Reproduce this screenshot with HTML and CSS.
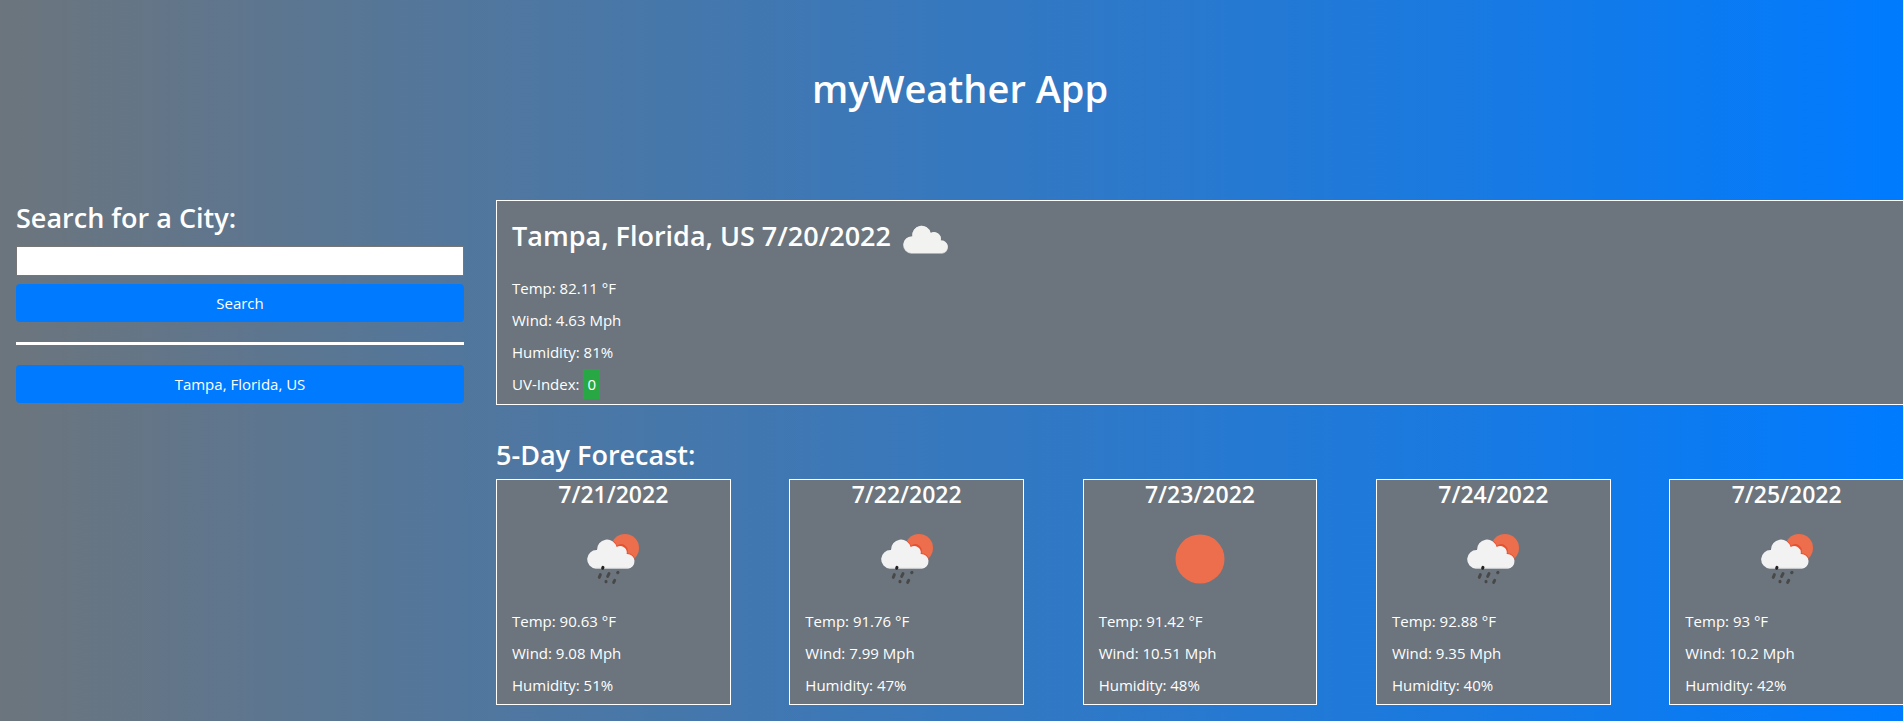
FILE: index.html
```html
<!DOCTYPE html>
<html lang="en">
<head>
<meta charset="utf-8">
<meta name="viewport" content="width=device-width, initial-scale=1">
<title>myWeather App</title>
<link rel="stylesheet" href="styles.css">
</head>
<body>
<svg class="sprite" aria-hidden="true">
  <symbol id="rain" viewBox="-20 -36 300 300">
    <circle cx="166" cy="81" r="42" fill="#ec6e4c"/>
    <path d="M79 142 A28 28 0 0 1 82 87 A30 30 0 0 1 140 76 A20 20 0 0 1 171 99 A21 21 0 0 1 175 142 Z" fill="#e8502f" transform="translate(2 -2)" clip-path="url(#sun-area)"/>
    <path d="M79 143 A28 28 0 0 1 82 87 A30 30 0 0 1 141 78 A20 20 0 0 1 171 99 A22 22 0 0 1 174 143 Z" fill="#f2f2f2"/>
    <path d="M78 142 H175" stroke="#b9bcbf" stroke-width="2"/>
    <g stroke="#484848" stroke-width="9" stroke-linecap="round">
      <path d="M92 161 L89 169 M118 158 L114 166 M145 154 L144 155 M109 181 L109 182 M135 178 L132 184"/>
      <path d="M100 139 L99 142" stroke="#222"/>
    </g>
  </symbol>
  <symbol id="sun" viewBox="0 0 100 100">
    <circle cx="50" cy="50" r="24.5" fill="#ec6e4c"/>
  </symbol>
  <symbol id="cloud" viewBox="0 0 225 225">
    <path d="M70 155 A25 25 0 0 1 73 105 A27 27 0 0 1 126 95 A20 20 0 0 1 155 117 A19 19 0 0 1 159 155 Z" fill="#c4c6c8"/>
    <path d="M70 153 A24 24 0 0 1 73 105 A27 27 0 0 1 126 95 A20 20 0 0 1 155 117 A18 18 0 0 1 159 153 Z" fill="#f2f2f0"/>
  </symbol>
  <clipPath id="sun-area"><circle cx="164" cy="83" r="42"/></clipPath>
</svg>

<div class="page">
  <header class="banner"><h1>myWeather App</h1></header>
  <div class="layout">
    <aside class="sidebar">
      <form class="search">
        <label class="heading" for="city">Search for a City:</label>
        <input class="city-input" id="city" type="text">
        <button class="btn" type="button">Search</button>
      </form>
      <hr class="divider">
      <button class="btn" type="button">Tampa, Florida, US</button>
    </aside>
    <main class="content">
      <section class="panel">
        <div class="today-title">
          <h2 class="heading">Tampa, Florida, US 7/20/2022</h2>
          <svg class="today-icon" role="img" aria-label="Cloudy"><use href="#cloud"/></svg>
        </div>
        <p>Temp: 82.11 °F</p>
        <p>Wind: 4.63 Mph</p>
        <p>Humidity: 81%</p>
        <p>UV-Index: <span class="uv">0</span></p>
      </section>
      <h2 class="heading forecast-heading">5-Day Forecast:</h2>
      <section class="forecast">
        <article class="panel day">
          <h3>7/21/2022</h3>
          <svg class="day-icon" role="img" aria-label="Rain"><use href="#rain"/></svg>
          <p>Temp: 90.63 °F</p><p>Wind: 9.08 Mph</p><p>Humidity: 51%</p>
        </article>
        <article class="panel day">
          <h3>7/22/2022</h3>
          <svg class="day-icon" role="img" aria-label="Rain"><use href="#rain"/></svg>
          <p>Temp: 91.76 °F</p><p>Wind: 7.99 Mph</p><p>Humidity: 47%</p>
        </article>
        <article class="panel day">
          <h3>7/23/2022</h3>
          <svg class="day-icon" role="img" aria-label="Clear"><use href="#sun"/></svg>
          <p>Temp: 91.42 °F</p><p>Wind: 10.51 Mph</p><p>Humidity: 48%</p>
        </article>
        <article class="panel day">
          <h3>7/24/2022</h3>
          <svg class="day-icon" role="img" aria-label="Rain"><use href="#rain"/></svg>
          <p>Temp: 92.88 °F</p><p>Wind: 9.35 Mph</p><p>Humidity: 40%</p>
        </article>
        <article class="panel day">
          <h3>7/25/2022</h3>
          <svg class="day-icon" role="img" aria-label="Rain"><use href="#rain"/></svg>
          <p>Temp: 93 °F</p><p>Wind: 10.2 Mph</p><p>Humidity: 42%</p>
        </article>
      </section>
    </main>
  </div>
</div>
</body>
</html>
```
FILE: styles.css
```css
* { box-sizing: border-box; }

body {
  margin: 0;
  min-height: 100vh;
  overflow-x: hidden;
  background: linear-gradient(to right, #6c757d, #007bff);
  color: #fff;
  font: 15px/24px "Segoe UI", "Open Sans", "Noto Sans", sans-serif;
}

h1, h2, h3, p { margin: 0; }

.sprite { position: absolute; width: 0; height: 0; }

/* The page runs under the scrollbar on the right. */
.page { margin-right: -17px; }

.banner { padding: 64px 16px 72px; text-align: center; }
.banner h1 { font-size: 38px; line-height: 48px; font-weight: 600; }

.layout { display: grid; grid-template-columns: 1fr 3fr; padding-top: 16px; }
.sidebar, .content { min-width: 0; padding: 0 16px; }

.heading { font-size: 27px; line-height: 36px; font-weight: 600; }

.search { display: flex; flex-direction: column; }
.city-input {
  height: 30px;
  margin: 10px 0 8px;
  padding: 0 4px;
  border: 1px solid #767676;
  background: #fff;
  font: inherit;
}
.btn {
  width: 100%;
  height: 38px;
  border: 0;
  border-radius: 4px;
  background: #007bff;
  color: #fff;
  font: inherit;
  cursor: pointer;
}
.divider { height: 3px; margin: 20px 0; border: 0; background: #fff; }

.panel {
  border: 1px solid #fff;
  padding: 0 15px 8px;
  background: #6c757d;
}
.panel p + p { margin-top: 8px; }

.today-title { display: flex; align-items: center; height: 75px; }
.today-title .heading { padding-bottom: 6px; }
.today-icon { width: 78px; height: 78px; margin-left: -4px; }
.uv { display: inline-block; padding: 3px 4px; margin: -3px 0; background: #28a745; }

.forecast-heading { margin: 32px 0 6px; }
.forecast { display: flex; justify-content: space-between; }
.day { width: 16.6667%; padding-bottom: 7px; }
.day h3 { font-size: 23px; line-height: 29px; font-weight: 600; text-align: center; }
.day-icon { display: block; width: 100px; height: 100px; margin: 0 auto; }
```
